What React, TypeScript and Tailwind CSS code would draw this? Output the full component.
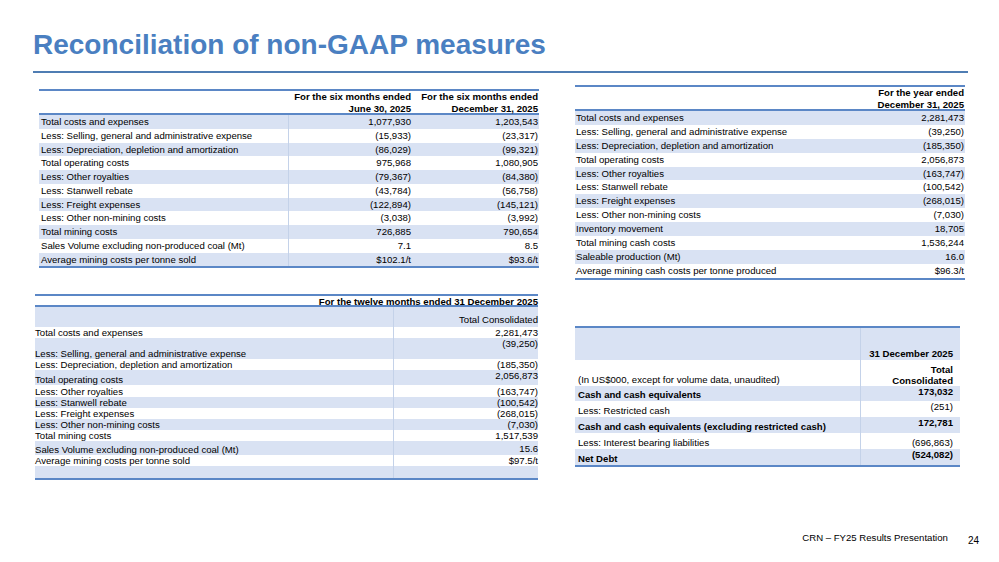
const line = 'border-[#5b87c6]';
const shade = 'bg-[#d9e2f3]';
const divider = 'border-l border-[#c4d2e9]';

const sixMonthRows: [string, string, string][] = [
  ['Total costs and expenses', '1,077,930', '1,203,543'],
  ['Less: Selling, general and administrative expense', '(15,933)', '(23,317)'],
  ['Less: Depreciation, depletion and amortization', '(86,029)', '(99,321)'],
  ['Total operating costs', '975,968', '1,080,905'],
  ['Less: Other royalties', '(79,367)', '(84,380)'],
  ['Less: Stanwell rebate', '(43,784)', '(56,758)'],
  ['Less: Freight expenses', '(122,894)', '(145,121)'],
  ['Less: Other non-mining costs', '(3,038)', '(3,992)'],
  ['Total mining costs', '726,885', '790,654'],
  ['Sales Volume excluding non-produced coal (Mt)', '7.1', '8.5'],
  ['Average mining costs per tonne sold', '$102.1/t', '$93.6/t'],
];

const yearRows: [string, string][] = [
  ['Total costs and expenses', '2,281,473'],
  ['Less: Selling, general and administrative expense', '(39,250)'],
  ['Less: Depreciation, depletion and amortization', '(185,350)'],
  ['Total operating costs', '2,056,873'],
  ['Less: Other royalties', '(163,747)'],
  ['Less: Stanwell rebate', '(100,542)'],
  ['Less: Freight expenses', '(268,015)'],
  ['Less: Other non-mining costs', '(7,030)'],
  ['Inventory movement', '18,705'],
  ['Total mining cash costs', '1,536,244'],
  ['Saleable production (Mt)', '16.0'],
  ['Average mining cash costs per tonne produced', '$96.3/t'],
];

type Row = {
  label: string;
  value: string;
  h: string;
  la?: string;
  va?: string;
  bold?: boolean;
};

// rows of the twelve months table have uneven heights, like the slide
const twelveRows: Row[] = [
  { label: 'Total costs and expenses', value: '2,281,473', h: 'h-[11px]' },
  { label: 'Less: Selling, general and administrative expense', value: '(39,250)', h: 'h-[21px]', la: 'items-end', va: 'items-start' },
  { label: 'Less: Depreciation, depletion and amortization', value: '(185,350)', h: 'h-[11px]' },
  { label: 'Total operating costs', value: '2,056,873', h: 'h-[15px]', la: 'items-end', va: 'items-start' },
  { label: 'Less: Other royalties', value: '(163,747)', h: 'h-[12px]' },
  { label: 'Less: Stanwell rebate', value: '(100,542)', h: 'h-[11px]' },
  { label: 'Less: Freight expenses', value: '(268,015)', h: 'h-[11px]' },
  { label: 'Less: Other non-mining costs', value: '(7,030)', h: 'h-[11px]' },
  { label: 'Total mining costs', value: '1,517,539', h: 'h-[11px]' },
  { label: 'Sales Volume excluding non-produced coal (Mt)', value: '15.6', h: 'h-[14px]', la: 'items-end', va: 'items-center' },
  { label: 'Average mining costs per tonne sold', value: '$97.5/t', h: 'h-[11px]' },
  { label: '', value: '', h: 'h-[12px]' },
];

const debtRows: Row[] = [
  { label: 'Cash and cash equivalents', value: '173,032', h: 'h-[15px]', la: 'items-end', va: 'items-start', bold: true },
  { label: 'Less: Restricted cash', value: '(251)', h: 'h-[16px]', la: 'items-end', va: 'items-start' },
  { label: 'Cash and cash equivalents (excluding restricted cash)', value: '172,781', h: 'h-[16px]', la: 'items-end', va: 'items-start', bold: true },
  { label: 'Less: Interest bearing liabilities', value: '(696,863)', h: 'h-[16px]', la: 'items-end', va: 'items-end' },
  { label: 'Net Debt', value: '(524,082)', h: 'h-[16px]', la: 'items-end', va: 'items-start', bold: true },
];

const SixMonthTable = () => (
  <div className={`ml-[4px] w-[500px] border-t-2 border-b-2 ${line}`}>
    <div className={`flex h-[24px] border-b-2 ${line} font-bold leading-[12px]`}>
      <div className="w-[249px]" />
      <div className="w-[124px] whitespace-nowrap pr-[1px] text-right">
        For the six months ended
        <br />
        June 30, 2025
      </div>
      <div className="w-[127px] whitespace-nowrap pr-[1px] text-right">
        For the six months ended
        <br />
        December 31, 2025
      </div>
    </div>
    {sixMonthRows.map((r, i) => (
      <div key={r[0]} className={`flex h-[13.75px] leading-[13.75px] ${i % 2 === 0 ? shade : ''}`}>
        <div className="w-[249px] whitespace-nowrap pl-[2px]">{r[0]}</div>
        <div className={`w-[124px] pr-[1px] text-right ${divider}`}>{r[1]}</div>
        <div className="w-[127px] pr-[1px] text-right">{r[2]}</div>
      </div>
    ))}
  </div>
);

const YearTable = () => (
  <div className={`w-[390px] border-t-2 border-b-2 ${line}`}>
    <div className={`flex h-[24px] justify-end border-b-2 ${line} pr-[1px] text-right font-bold leading-[12px]`}>
      <div>
        For the year ended
        <br />
        December 31, 2025
      </div>
    </div>
    {yearRows.map((r, i) => (
      <div
        key={r[0]}
        className={`flex h-[13.9px] justify-between px-[1px] leading-[13.9px] ${i % 2 === 0 ? shade : ''}`}
      >
        <span className="whitespace-nowrap">{r[0]}</span>
        <span>{r[1]}</span>
      </div>
    ))}
  </div>
);

const TwelveMonthTable = () => (
  <div className={`w-[503px] border-t-2 border-b-2 ${line}`}>
    <div className={`h-[11px] border-b-2 ${line} text-right font-bold leading-[11px]`}>
      For the twelve months ended 31 December 2025
    </div>
    <div className={`flex h-[20px] ${shade}`}>
      <div className="w-[358px]" />
      <div className={`flex w-[145px] items-end justify-end pb-[1px] leading-[12px] ${divider}`}>Total Consolidated</div>
    </div>
    {twelveRows.map((r, i) => (
      <div key={i} className={`flex ${r.h} leading-[11px] ${i % 2 === 1 || i === 11 ? shade : ''}`}>
        <div className={`flex w-[358px] whitespace-nowrap ${r.la ?? 'items-center'}`}>{r.label}</div>
        <div className={`flex w-[145px] justify-end ${r.va ?? 'items-center'} ${divider}`}>{r.value}</div>
      </div>
    ))}
  </div>
);

const DebtTable = () => (
  <div className={`w-[385px] border-t-2 border-b-2 ${line}`}>
    <div className={`flex h-[32px] ${shade}`}>
      <div className="w-[285px]" />
      <div className={`flex w-[100px] items-end justify-end pr-[7px] font-bold leading-[12px] ${divider}`}>
        31 December 2025
      </div>
    </div>
    <div className="flex h-[26px]">
      <div className="flex w-[285px] items-end pl-[3px] leading-[12px]">
        (In US$000, except for volume data, unaudited)
      </div>
      <div className={`flex w-[100px] items-end justify-end pr-[7px] text-right font-bold leading-[11px] ${divider}`}>
        <div>
          Total
          <br />
          Consolidated
        </div>
      </div>
    </div>
    {debtRows.map((r, i) => (
      <div key={r.label} className={`flex ${r.h} leading-[12px] ${r.bold ? 'font-bold' : ''} ${i % 2 === 0 ? shade : ''}`}>
        <div className={`flex w-[285px] whitespace-nowrap pl-[3px] ${r.la}`}>{r.label}</div>
        <div className={`flex w-[100px] justify-end pr-[7px] ${r.va} ${divider}`}>{r.value}</div>
      </div>
    ))}
  </div>
);

export default function App() {
  return (
    <div className="flex h-[562px] w-[999px] flex-col bg-white font-['Liberation_Sans',Arial,sans-serif] text-[9.6px] text-black">
      <div className="pl-[33px]">
        <h1 className="pt-[29px] text-[28px] font-bold leading-[32px] text-[#4a7fc1]">
          Reconciliation of non-GAAP measures
        </h1>
        <div className="mt-[10px] h-[2px] w-[935px] bg-[#4f7db3]" />

        <div className="flex gap-[35px] pl-[2px] pt-[12px]">
          <div className="flex w-[505px] flex-col pt-[4px]">
            <SixMonthTable />
            <div className="mt-[26px]">
              <TwelveMonthTable />
            </div>
          </div>
          <div className="flex w-[392px] flex-col">
            <YearTable />
            <div className="mt-[46px]">
              <DebtTable />
            </div>
          </div>
        </div>
      </div>

      <div className="mt-auto flex items-end justify-end gap-[20px] pb-[15px] pr-[20px]">
        <span className="pb-[3px] leading-[12px]">CRN – FY25 Results Presentation</span>
        <span className="text-[10px] leading-[12px]">24</span>
      </div>
    </div>
  );
}
